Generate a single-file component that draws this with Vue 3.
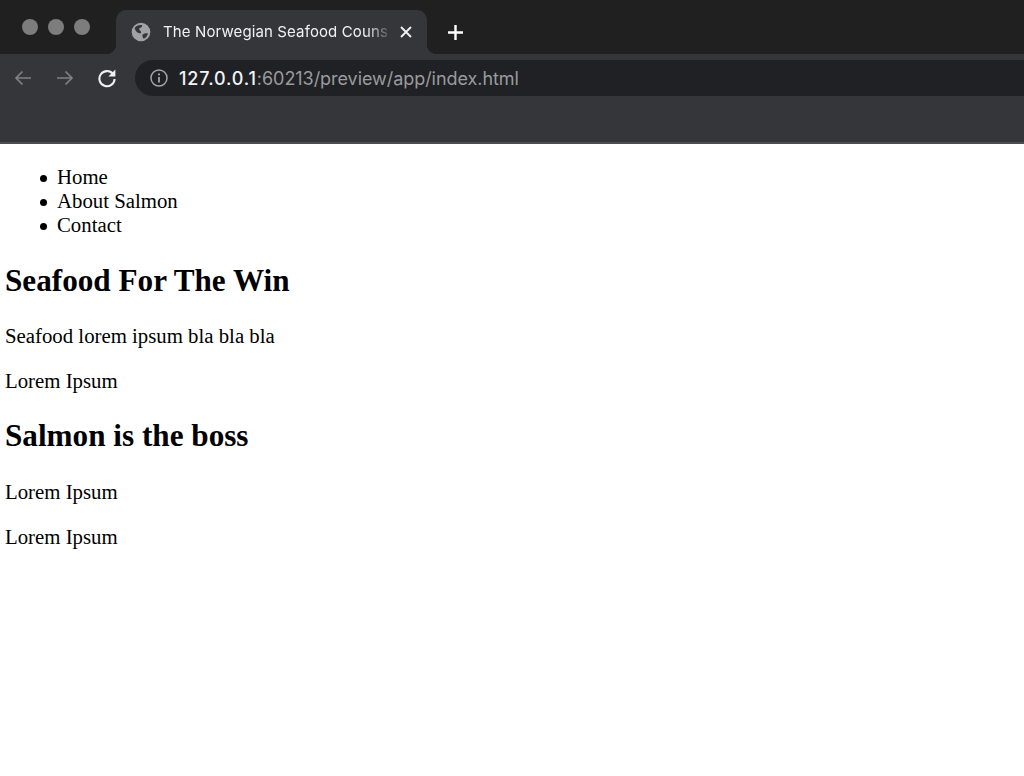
<script setup>
const links = ['Home', 'About Salmon', 'Contact']
</script>

<template>
  <div class="page">
    <header class="chrome">
      <div class="strip">
        <div class="lights"><i></i><i></i><i></i></div>
        <div class="tab">
          <svg class="globe" width="20" height="20" viewBox="0 0 20 20">
            <circle cx="10" cy="10" r="9.3" fill="#a0a2a6" />
            <path d="M3.6 6.2 C5 3.6 8 2.6 11 3 C11.6 4.4 10.6 5.4 9.2 5.8 C8 6.2 7.8 7.4 8.8 8.2 C9.8 9 10.6 10 9.8 11.2 C8.4 11.6 6.8 11 5.6 9.8 C4.8 8.8 4 7.6 3.6 6.2 Z" fill="#35363a" />
            <path d="M11.6 12.4 C13.4 11.2 15.4 11 17 11.6 C16.4 14 14.8 16 12.6 16.8 C11.8 15.4 11 13.8 11.6 12.4 Z" fill="#35363a" />
          </svg>
          <span class="title">The Norwegian Seafood Couns</span>
          <svg class="close" width="12" height="12" viewBox="0 0 12 12">
            <path d="M1 1 L11 11 M11 1 L1 11" stroke="#f0f0f0" stroke-width="1.9" />
          </svg>
        </div>
        <svg class="plus" width="17" height="17" viewBox="0 0 17 17">
          <path d="M8.5 1 V16 M1 8.5 H16" stroke="#ffffff" stroke-width="2.4" />
        </svg>
      </div>
      <div class="toolbar">
        <svg class="nav first" width="20" height="18" viewBox="0 0 20 18">
          <path d="M18 9 H3 M9.5 2.5 L3 9 L9.5 15.5" fill="none" stroke="#808184" stroke-width="1.7" />
        </svg>
        <svg class="nav" width="20" height="18" viewBox="0 0 20 18">
          <path d="M2 9 H17 M10.5 2.5 L17 9 L10.5 15.5" fill="none" stroke="#808184" stroke-width="1.7" />
        </svg>
        <svg class="nav reload" width="20" height="20" viewBox="0 0 20 20">
          <path d="M16 6 A7.6 7.6 0 1 0 17.6 11" fill="none" stroke="#f0f0f0" stroke-width="2.1" />
          <path d="M18.4 1.6 V8.6 H11.4 Z" fill="#f0f0f0" />
        </svg>
        <div class="omnibox">
          <svg class="info" width="18" height="18" viewBox="0 0 18 18">
            <circle cx="9" cy="9" r="8" fill="none" stroke="#a2a4a7" stroke-width="1.5" />
            <path d="M9 8 V13.4" stroke="#a2a4a7" stroke-width="1.8" />
            <circle cx="9" cy="5.4" r="1.1" fill="#a2a4a7" />
          </svg>
          <span class="url"><b>127.0.0.1</b>:60213/preview/app/index.html</span>
        </div>
      </div>
    </header>
    <main class="doc">
      <ul>
        <li v-for="link in links" :key="link">{{ link }}</li>
      </ul>
      <h2>Seafood For The Win</h2>
      <p>Seafood lorem ipsum bla bla bla</p>
      <p>Lorem Ipsum</p>
      <h2 class="boss">Salmon is the boss</h2>
      <p>Lorem Ipsum</p>
      <p>Lorem Ipsum</p>
    </main>
  </div>
</template>

<style>
html, body { margin: 0; background: #fff; overflow: hidden; }
</style>

<style scoped>
.page { width: 1024px; height: 776px; overflow: hidden; background: #fff; font-family: "Liberation Serif", serif; color: #000; }
.chrome { height: 144px; background: #35363a; border-bottom: 2px solid #4c4d51; box-sizing: border-box; font-family: Inter, "Liberation Sans", sans-serif; }
.strip { height: 54px; background: #202020; display: flex; align-items: flex-start; }
.lights { width: 116px; padding: 19px 0 0 22px; box-sizing: border-box; display: flex; gap: 10px; }
.lights i { width: 16px; height: 16px; border-radius: 50%; background: #7d7d7d; }
.tab { position: relative; width: 311px; height: 44px; margin-top: 10px; background: #35363a; border-radius: 10px 10px 0 0; display: flex; align-items: center; padding: 0 15px 0 15px; box-sizing: border-box; }
.tab::before, .tab::after { content: ""; position: absolute; bottom: 0; width: 10px; height: 10px; }
.tab::before { left: -10px; background: radial-gradient(circle at 0 0, transparent 10px, #35363a 10.5px); }
.tab::after { right: -10px; background: radial-gradient(circle at 100% 0, transparent 10px, #35363a 10.5px); }
.globe { flex: none; margin-right: 12px; }
.title { flex: 1; font-size: 15px; letter-spacing: 0.12px; line-height: 20px; color: #f0f1f2; white-space: nowrap; overflow: hidden; -webkit-mask-image: linear-gradient(90deg, #000 204px, rgba(0,0,0,0.12) 226px); mask-image: linear-gradient(90deg, #000 204px, rgba(0,0,0,0.12) 226px); }
.close { flex: none; }
.plus { margin: 24px 0 0 20px; }
.toolbar { height: 88px; padding: 6px 0 0 13px; box-sizing: border-box; display: flex; align-items: flex-start; }
.nav { flex: none; margin: 9px 22px 0 0; }
.nav.reload { margin: 8px 18px 0 0; }
.omnibox { flex: 1; height: 36px; margin-right: -20px; background: #202124; border-radius: 18px; display: flex; align-items: center; padding-left: 15px; }
.info { flex: none; margin-right: 11px; }
.url { font-size: 18px; color: #9a9b9e; white-space: nowrap; letter-spacing: -0.05px; }
.url b { font-weight: 500; color: #f1f3f4; letter-spacing: 0.85px; }
.doc { padding: 0 5px; font-size: 20.8px; line-height: 24px; }
ul { margin: 21px 0 26px; padding-left: 52px; list-style: none; }
li { position: relative; }
li::before { content: ""; position: absolute; left: -17px; top: 10px; width: 7px; height: 7px; border-radius: 50%; background: #000; }
h2 { margin: 24.8px 0 25.2px; font-size: 31.2px; line-height: 36px; font-weight: 700; }
h2.boss { margin-bottom: 26px; }
p { margin: 21px 0; }
</style>
